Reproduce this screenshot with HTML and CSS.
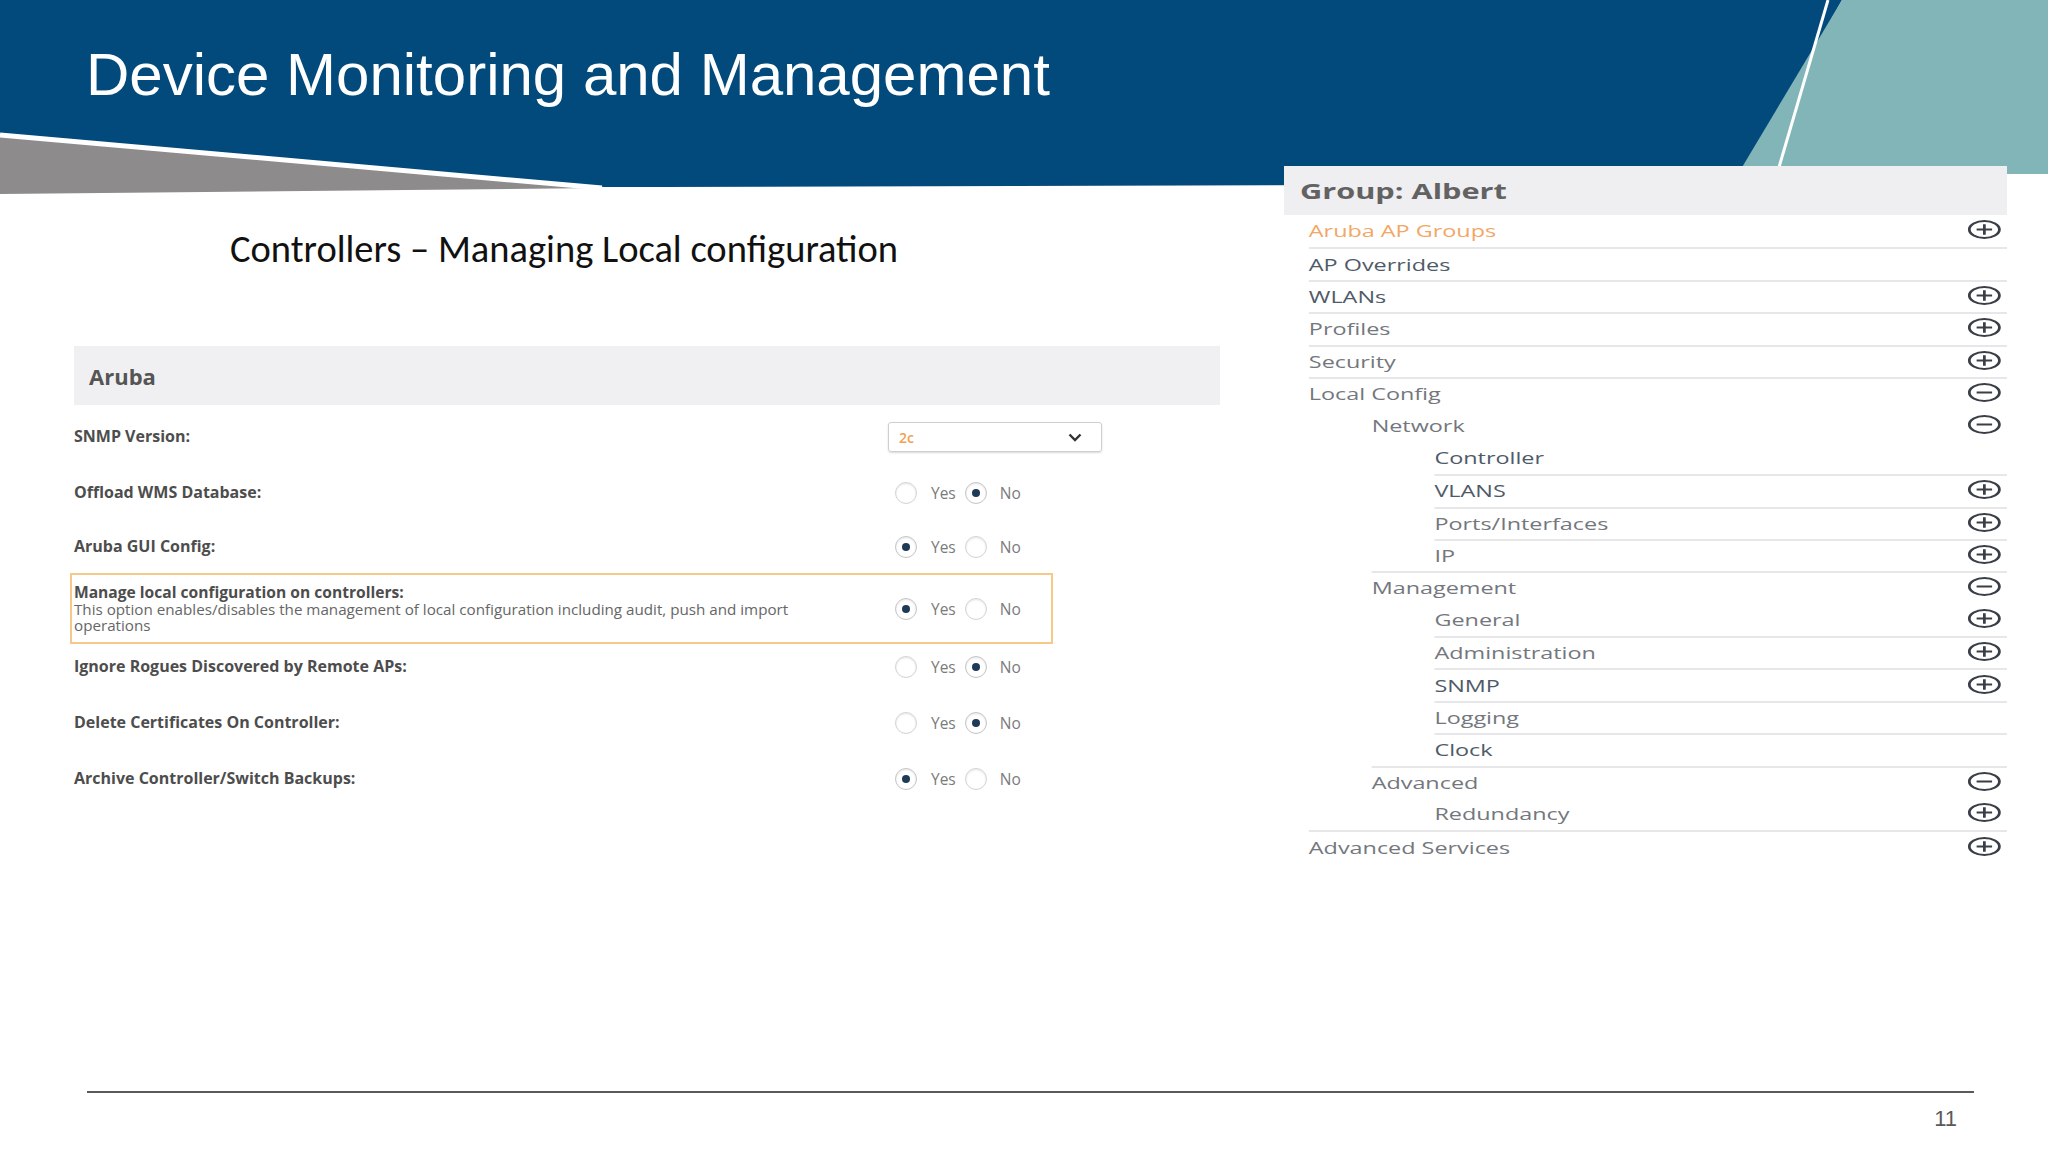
FILE: index.html
```html
<!DOCTYPE html>
<html lang="en">
<head>
<meta charset="utf-8">
<title>Device Monitoring and Management</title>
<link rel="stylesheet" href="styles.css">
</head>
<body>
<div class="slide">
  <header class="banner">
    <svg class="banner-art" viewBox="0 0 2048 200" width="2048" height="200" aria-hidden="true">
      <polygon fill="#8d8b8c" points="0,136 602,188 0,194"/>
      <polygon fill="#034a7c" points="0,0 1842,0 1738,184 660,187 600,187 0,134"/>
      <line x1="0" y1="135" x2="602" y2="188" stroke="#ffffff" stroke-width="5"/>
      <polygon fill="#82b5b7" points="1842,0 2048,0 2048,174 1738,174"/>
      <line x1="1828" y1="0" x2="1777" y2="174" stroke="#ffffff" stroke-width="3"/>
    </svg>
    <h1 class="title">Device Monitoring and Management</h1>
  </header>

  <main class="content">
    <section class="left">
      <h2 class="subtitle">Controllers – Managing Local configuration</h2>
      <div class="aruba">
        <div class="aruba-head">Aruba</div>
        <div class="rows">
          <div class="row">
            <div class="label">SNMP Version:</div>
            <div class="select">
              <span class="select-val">2c</span>
              <svg class="chev" viewBox="0 0 14 9" width="14" height="9"><path d="M1.5 1.5 7 7l5.5-5.5" fill="none" stroke="#333" stroke-width="2.4"/></svg>
            </div>
          </div>
          <div class="row">
            <div class="label">Offload WMS Database:</div>
            <div class="choice"><span class="radio"></span><span class="opt opt-yes">Yes</span><span class="radio on"></span><span class="opt opt-no">No</span></div>
          </div>
          <div class="row row-short">
            <div class="label">Aruba GUI Config:</div>
            <div class="choice"><span class="radio on"></span><span class="opt opt-yes">Yes</span><span class="radio"></span><span class="opt opt-no">No</span></div>
          </div>
          <div class="row highlight">
            <div class="label-block">
              <div class="label hl-title">Manage local configuration on controllers:</div>
              <div class="desc">This option enables/disables the management of local configuration including audit, push and import operations</div>
            </div>
            <div class="choice"><span class="radio on"></span><span class="opt opt-yes">Yes</span><span class="radio"></span><span class="opt opt-no">No</span></div>
          </div>
          <div class="row">
            <div class="label">Ignore Rogues Discovered by Remote APs:</div>
            <div class="choice"><span class="radio"></span><span class="opt opt-yes">Yes</span><span class="radio on"></span><span class="opt opt-no">No</span></div>
          </div>
          <div class="row">
            <div class="label">Delete Certificates On Controller:</div>
            <div class="choice"><span class="radio"></span><span class="opt opt-yes">Yes</span><span class="radio on"></span><span class="opt opt-no">No</span></div>
          </div>
          <div class="row">
            <div class="label">Archive Controller/Switch Backups:</div>
            <div class="choice"><span class="radio on"></span><span class="opt opt-yes">Yes</span><span class="radio"></span><span class="opt opt-no">No</span></div>
          </div>
        </div>
      </div>
    </section>

    <aside class="group-panel">
      <div class="panel-inner">
        <div class="panel-head">Group: Albert</div>
        <ul class="tree">
          <li><div class="node accent"><span>Aruba AP Groups</span><svg class="ic" viewBox="0 0 23 19"><ellipse cx="11.5" cy="9.5" rx="10.3" ry="8.5"/><path d="M6.2 9.5h10.6M11.5 4.2v10.6"/></svg></div></li>
          <li><div class="node dark"><span>AP Overrides</span></div></li>
          <li><div class="node dark"><span>WLANs</span><svg class="ic" viewBox="0 0 23 19"><ellipse cx="11.5" cy="9.5" rx="10.3" ry="8.5"/><path d="M6.2 9.5h10.6M11.5 4.2v10.6"/></svg></div></li>
          <li><div class="node"><span>Profiles</span><svg class="ic" viewBox="0 0 23 19"><ellipse cx="11.5" cy="9.5" rx="10.3" ry="8.5"/><path d="M6.2 9.5h10.6M11.5 4.2v10.6"/></svg></div></li>
          <li><div class="node"><span>Security</span><svg class="ic" viewBox="0 0 23 19"><ellipse cx="11.5" cy="9.5" rx="10.3" ry="8.5"/><path d="M6.2 9.5h10.6M11.5 4.2v10.6"/></svg></div></li>
          <li><div class="node"><span>Local Config</span><svg class="ic" viewBox="0 0 23 19"><ellipse cx="11.5" cy="9.5" rx="10.3" ry="8.5"/><path d="M6.2 9.5h10.6"/></svg></div>
            <ul>
              <li><div class="node"><span>Network</span><svg class="ic" viewBox="0 0 23 19"><ellipse cx="11.5" cy="9.5" rx="10.3" ry="8.5"/><path d="M6.2 9.5h10.6"/></svg></div>
                <ul>
                  <li><div class="node dark"><span>Controller</span></div></li>
                  <li><div class="node dark"><span>VLANS</span><svg class="ic" viewBox="0 0 23 19"><ellipse cx="11.5" cy="9.5" rx="10.3" ry="8.5"/><path d="M6.2 9.5h10.6M11.5 4.2v10.6"/></svg></div></li>
                  <li><div class="node"><span>Ports/Interfaces</span><svg class="ic" viewBox="0 0 23 19"><ellipse cx="11.5" cy="9.5" rx="10.3" ry="8.5"/><path d="M6.2 9.5h10.6M11.5 4.2v10.6"/></svg></div></li>
                  <li><div class="node"><span>IP</span><svg class="ic" viewBox="0 0 23 19"><ellipse cx="11.5" cy="9.5" rx="10.3" ry="8.5"/><path d="M6.2 9.5h10.6M11.5 4.2v10.6"/></svg></div></li>
                </ul>
              </li>
              <li><div class="node"><span>Management</span><svg class="ic" viewBox="0 0 23 19"><ellipse cx="11.5" cy="9.5" rx="10.3" ry="8.5"/><path d="M6.2 9.5h10.6"/></svg></div>
                <ul>
                  <li><div class="node"><span>General</span><svg class="ic" viewBox="0 0 23 19"><ellipse cx="11.5" cy="9.5" rx="10.3" ry="8.5"/><path d="M6.2 9.5h10.6M11.5 4.2v10.6"/></svg></div></li>
                  <li><div class="node"><span>Administration</span><svg class="ic" viewBox="0 0 23 19"><ellipse cx="11.5" cy="9.5" rx="10.3" ry="8.5"/><path d="M6.2 9.5h10.6M11.5 4.2v10.6"/></svg></div></li>
                  <li><div class="node dark"><span>SNMP</span><svg class="ic" viewBox="0 0 23 19"><ellipse cx="11.5" cy="9.5" rx="10.3" ry="8.5"/><path d="M6.2 9.5h10.6M11.5 4.2v10.6"/></svg></div></li>
                  <li><div class="node"><span>Logging</span></div></li>
                  <li><div class="node dark"><span>Clock</span></div></li>
                </ul>
              </li>
              <li><div class="node"><span>Advanced</span><svg class="ic" viewBox="0 0 23 19"><ellipse cx="11.5" cy="9.5" rx="10.3" ry="8.5"/><path d="M6.2 9.5h10.6"/></svg></div>
                <ul>
                  <li><div class="node"><span>Redundancy</span><svg class="ic" viewBox="0 0 23 19"><ellipse cx="11.5" cy="9.5" rx="10.3" ry="8.5"/><path d="M6.2 9.5h10.6M11.5 4.2v10.6"/></svg></div></li>
                </ul>
              </li>
            </ul>
          </li>
          <li><div class="node"><span>Advanced Services</span><svg class="ic" viewBox="0 0 23 19"><ellipse cx="11.5" cy="9.5" rx="10.3" ry="8.5"/><path d="M6.2 9.5h10.6M11.5 4.2v10.6"/></svg></div></li>
        </ul>
      </div>
    </aside>
  </main>

  <footer class="footer"><span class="page-num">11</span></footer>
</div>
</body>
</html>
```

FILE: styles.css
```css
* { box-sizing: border-box; }

body {
  margin: 0;
  background: #ffffff;
}

.slide {
  width: 2048px;
  height: 1152px;
  display: grid;
  grid-template-rows: 193px 898px 61px;
  overflow: hidden;
  background: #ffffff;
  font-family: "Open Sans", sans-serif;
}

/* ---------- banner ---------- */
.banner {
  position: relative;
}

.banner-art {
  position: absolute;
  left: 0;
  top: 0;
  display: block;
}

.title {
  position: relative;
  margin: 0;
  padding: 40px 0 0 86px;
  font: 400 60px/69px "Liberation Sans", Arial, sans-serif;
  color: #ffffff;
}

/* ---------- content ---------- */
.content {
  display: flex;
  align-items: flex-start;
}

.left {
  flex: 0 0 1284px;
  padding-top: 32px;
}

.subtitle {
  margin: 0 0 0 230px;
  font: 400 38.5px/48px "Carlito", "Liberation Sans Narrow", "Liberation Sans", sans-serif;
  color: #111111;
}

.aruba {
  margin: 73px 0 0 74px;
  width: 1146px;
}

.aruba-head {
  height: 59px;
  background: #f0f0f2;
  padding-left: 15px;
  display: flex;
  align-items: center;
  font: 700 22px "Open Sans", sans-serif;
  color: #555555;
}

.rows {
  margin-top: 4px;
}

.row {
  display: grid;
  grid-template-columns: 814px 1fr;
  align-items: center;
  height: 56px;
}

.row-short {
  height: 52px;
}

.label {
  font: 700 16px/1.1 "Open Sans", sans-serif;
  color: #4d4d4d;
}

.highlight {
  margin-left: -4px;
  width: 983px;
  height: 71px;
  border: 2px solid #f6c98b;
  padding-left: 2px;
  margin-bottom: -5px;
}

.label-block {
  max-width: 760px;
}

.hl-title {
  font-size: 15.6px;
  line-height: 17px;
}

.desc {
  font: 400 15.2px/16px "Open Sans", sans-serif;
  color: #666666;
}

.select {
  width: 214px;
  height: 30px;
  border: 1px solid #cfcfcf;
  border-radius: 3px;
  box-shadow: 0 1px 2px rgba(0, 0, 0, 0.15);
  display: flex;
  align-items: center;
  justify-content: space-between;
  padding: 0 19px 0 10px;
}

.select-val {
  font: 600 14px "Open Sans", sans-serif;
  color: #f0a050;
}

.chev { display: block; }

.choice {
  display: flex;
  align-items: center;
  padding-left: 7px;
}

.radio {
  width: 22px;
  height: 22px;
  border-radius: 50%;
  border: 1.5px solid #d3d3d3;
  box-shadow: inset 0 1px 2px rgba(0, 0, 0, 0.1);
  display: flex;
  align-items: center;
  justify-content: center;
  background: #ffffff;
}

.radio.on {
  border-color: #c4c4c4;
}

.radio.on::after {
  content: "";
  width: 8px;
  height: 8px;
  border-radius: 50%;
  background: #1e3a56;
}

.opt {
  font: 400 15.5px "Open Sans", sans-serif;
  color: #7b7b7b;
}

.opt-yes { margin: 0 9px 0 14px; }
.opt-no { margin-left: 13px; }

/* ---------- right panel ---------- */
.group-panel {
  flex: 0 0 723px;
  margin-top: -27px;
  position: relative;
  z-index: 1;
  background: #ffffff;
}

.panel-inner {
  width: 495px;
  transform: scaleX(1.4606);
  transform-origin: 0 0;
}

.panel-head {
  height: 49px;
  background: #efeef1;
  padding-left: 11px;
  display: flex;
  align-items: center;
  font: 700 21px "Open Sans", sans-serif;
  color: #626262;
}

.tree,
.tree ul {
  list-style: none;
  margin: 0;
  padding: 0;
}

.tree { padding-left: 17px; }
.tree ul { padding-left: 43px; }

.node {
  height: 32.4px;
  display: flex;
  align-items: center;
  justify-content: space-between;
  padding-right: 4.5px;
  font: 400 16px "Open Sans", sans-serif;
  color: #74777d;
}

li + li > .node {
  border-top: 2px solid #e7e7e9;
}

.node.dark { color: #4f5a68; }
.node.accent { color: #f2a766; }

.ic {
  width: 23px;
  height: 19px;
  display: block;
  flex: none;
  margin-top: -3px;
}

.ic ellipse,
.ic path {
  fill: none;
  stroke: #3a3f47;
  stroke-width: 1.9;
}

/* ---------- footer ---------- */
.footer {
  margin: 0 74px 0 87px;
  border-top: 2px solid #5a5a5a;
  text-align: right;
  padding: 13px 17px 0 0;
}

.page-num {
  font: 400 22px/25px "Liberation Sans", Arial, sans-serif;
  color: #595959;
}
```
